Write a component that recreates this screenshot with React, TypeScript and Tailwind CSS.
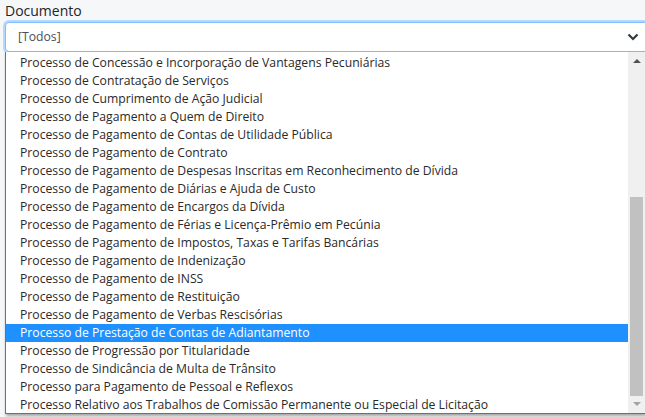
const items = [
  "Processo de Concessão e Incorporação de Vantagens Pecuniárias",
  "Processo de Contratação de Serviços",
  "Processo de Cumprimento de Ação Judicial",
  "Processo de Pagamento a Quem de Direito",
  "Processo de Pagamento de Contas de Utilidade Pública",
  "Processo de Pagamento de Contrato",
  "Processo de Pagamento de Despesas Inscritas em Reconhecimento de Dívida",
  "Processo de Pagamento de Diárias e Ajuda de Custo",
  "Processo de Pagamento de Encargos da Dívida",
  "Processo de Pagamento de Férias e Licença-Prêmio em Pecúnia",
  "Processo de Pagamento de Impostos, Taxas e Tarifas Bancárias",
  "Processo de Pagamento de Indenização",
  "Processo de Pagamento de INSS",
  "Processo de Pagamento de Restituição",
  "Processo de Pagamento de Verbas Rescisórias",
  "Processo de Prestação de Contas de Adiantamento",
  "Processo de Progressão por Titularidade",
  "Processo de Sindicância de Multa de Trânsito",
  "Processo para Pagamento de Pessoal e Reflexos",
  "Processo Relativo aos Trabalhos de Comissão Permanente ou Especial de Licitação",
];

const SELECTED = 15;

export default function App() {
  return (
    <div
      className="h-[417px] w-[645px] overflow-hidden bg-[#f6f7f9] pl-[5px] text-[#495057]"
      style={{ fontFamily: '"Open Sans", "Noto Sans", sans-serif' }}
    >
      <div className="text-[14px] leading-[21px] text-[#212529]">Documento</div>
      <div className="mt-[1px] flex h-[30px] w-[650px] items-center justify-between rounded-[4px] border border-[#80bdff] bg-white pl-[12px] pr-[16px] text-[12.2px] shadow-[0_0_0_2px_rgba(0,123,255,0.25)]">
        <span>[Todos]</span>
        <svg width="12" height="8" viewBox="0 0 12 8" className="mr-[-1px]">
          <path d="M1.5 1.5 L6 6 L10.5 1.5" fill="none" stroke="#343a40" strokeWidth="2.2" />
        </svg>
      </div>
      <div className="flex h-[362px] border-b border-l border-[#707070] bg-white shadow-[1px_2px_3px_rgba(0,0,0,0.35)]">
        <div className="flex-1 pt-[2px] text-[12.2px] text-[#2a2a2a]">
          {items.map((t, i) => (
            <div
              key={t}
              className={
                "h-[18px] whitespace-nowrap pl-[14px] leading-[18px] " +
                (i === SELECTED ? "bg-[#1e90ff] text-white" : "")
              }
            >
              {t}
            </div>
          ))}
        </div>
        <div className="flex w-[17px] flex-col items-center bg-[#f0f0f0]">
          <div className="flex h-[17px] w-full items-center justify-center">
            <svg width="8" height="5" viewBox="0 0 8 5">
              <path d="M0 5 L4 1 L8 5 Z" fill="#505050" />
            </svg>
          </div>
          <div className="h-[128px]" />
          <div className="h-[199px] w-[13px] bg-[#c1c1c1]" />
          <div className="flex h-[17px] w-full items-center justify-center">
            <svg width="8" height="5" viewBox="0 0 8 5">
              <path d="M0 0 L8 0 L4 4 Z" fill="#a3a3a3" />
            </svg>
          </div>
        </div>
      </div>
    </div>
  );
}
